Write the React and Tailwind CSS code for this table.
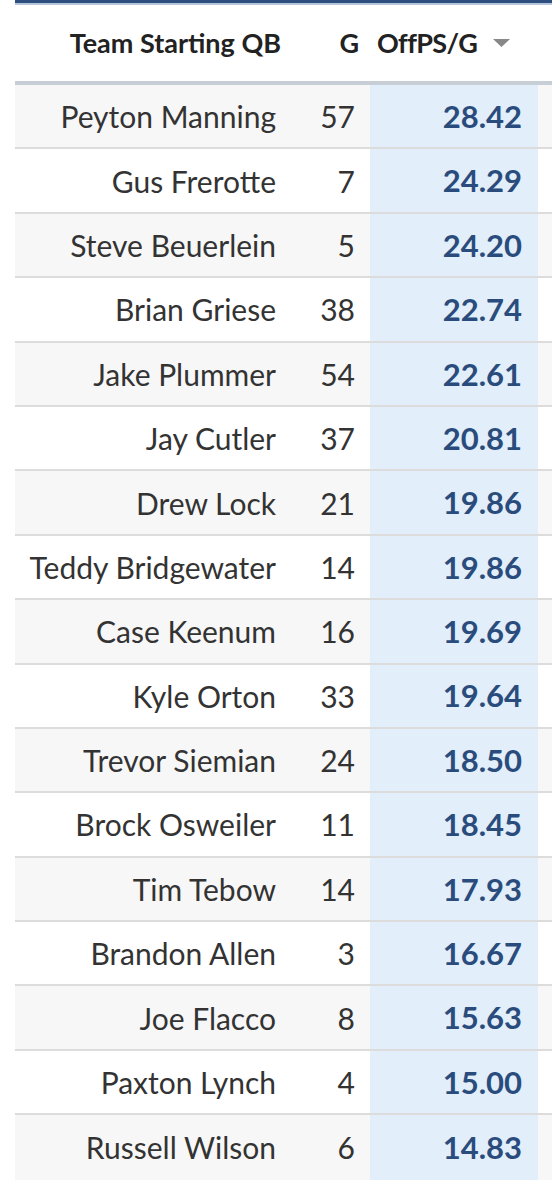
import React from "react";

const rows = [
  ["Peyton Manning", 57, "28.42"],
  ["Gus Frerotte", 7, "24.29"],
  ["Steve Beuerlein", 5, "24.20"],
  ["Brian Griese", 38, "22.74"],
  ["Jake Plummer", 54, "22.61"],
  ["Jay Cutler", 37, "20.81"],
  ["Drew Lock", 21, "19.86"],
  ["Teddy Bridgewater", 14, "19.86"],
  ["Case Keenum", 16, "19.69"],
  ["Kyle Orton", 33, "19.64"],
  ["Trevor Siemian", 24, "18.50"],
  ["Brock Osweiler", 11, "18.45"],
  ["Tim Tebow", 14, "17.93"],
  ["Brandon Allen", 3, "16.67"],
  ["Joe Flacco", 8, "15.63"],
  ["Paxton Lynch", 4, "15.00"],
  ["Russell Wilson", 6, "14.83"],
];

export default function App() {
  return (
    <div className="w-[552px] h-[1192px] overflow-hidden bg-white" style={{ fontFamily: "Lato, 'Open Sans', sans-serif" }}>
      <div className="ml-[15px] w-[600px]">
        <div className="h-[3px] bg-[#2d4e7e]" />
        <div className="h-[2px] bg-[#b4c6da]" />
        <div className="grid grid-cols-[275px_80px_168px_77px] h-[80px] items-center border-b-[4px] border-[#c8ced6] text-[27px] font-bold text-[#222]">
          <div className="text-right pr-[9px]">Team Starting QB</div>
          <div className="text-right pr-[11px]">G</div>
          <div className="flex items-center pl-[7px] gap-[16px]">
            <span className="tracking-[-0.6px]">OffPS/G</span>
            <svg width="17" height="8" viewBox="0 0 17 8"><path d="M0 0h17L8.5 8z" fill="#888" /></svg>
          </div>
          <div />
        </div>
        {rows.map(([name, g, v], i) => (
          <div
            key={name}
            className={`grid grid-cols-[275px_80px_168px_77px] h-[64.4px] items-center text-[30px] text-[#333] ${i < rows.length - 1 ? "border-b-2 border-[#dcdcdc]" : ""} ${i % 2 === 0 ? "bg-[#f7f7f7]" : "bg-white"}`}
          >
            <div className="text-right pr-[14px] leading-none">{name}</div>
            <div className="text-right pr-[15px] leading-none">{g}</div>
            <div className="h-full flex items-center justify-end pr-[16px] bg-[#e2eef9] text-[31px] font-bold text-[#2a4c7d]">{v}</div>
            <div className="h-full" />
          </div>
        ))}
      </div>
    </div>
  );
}
